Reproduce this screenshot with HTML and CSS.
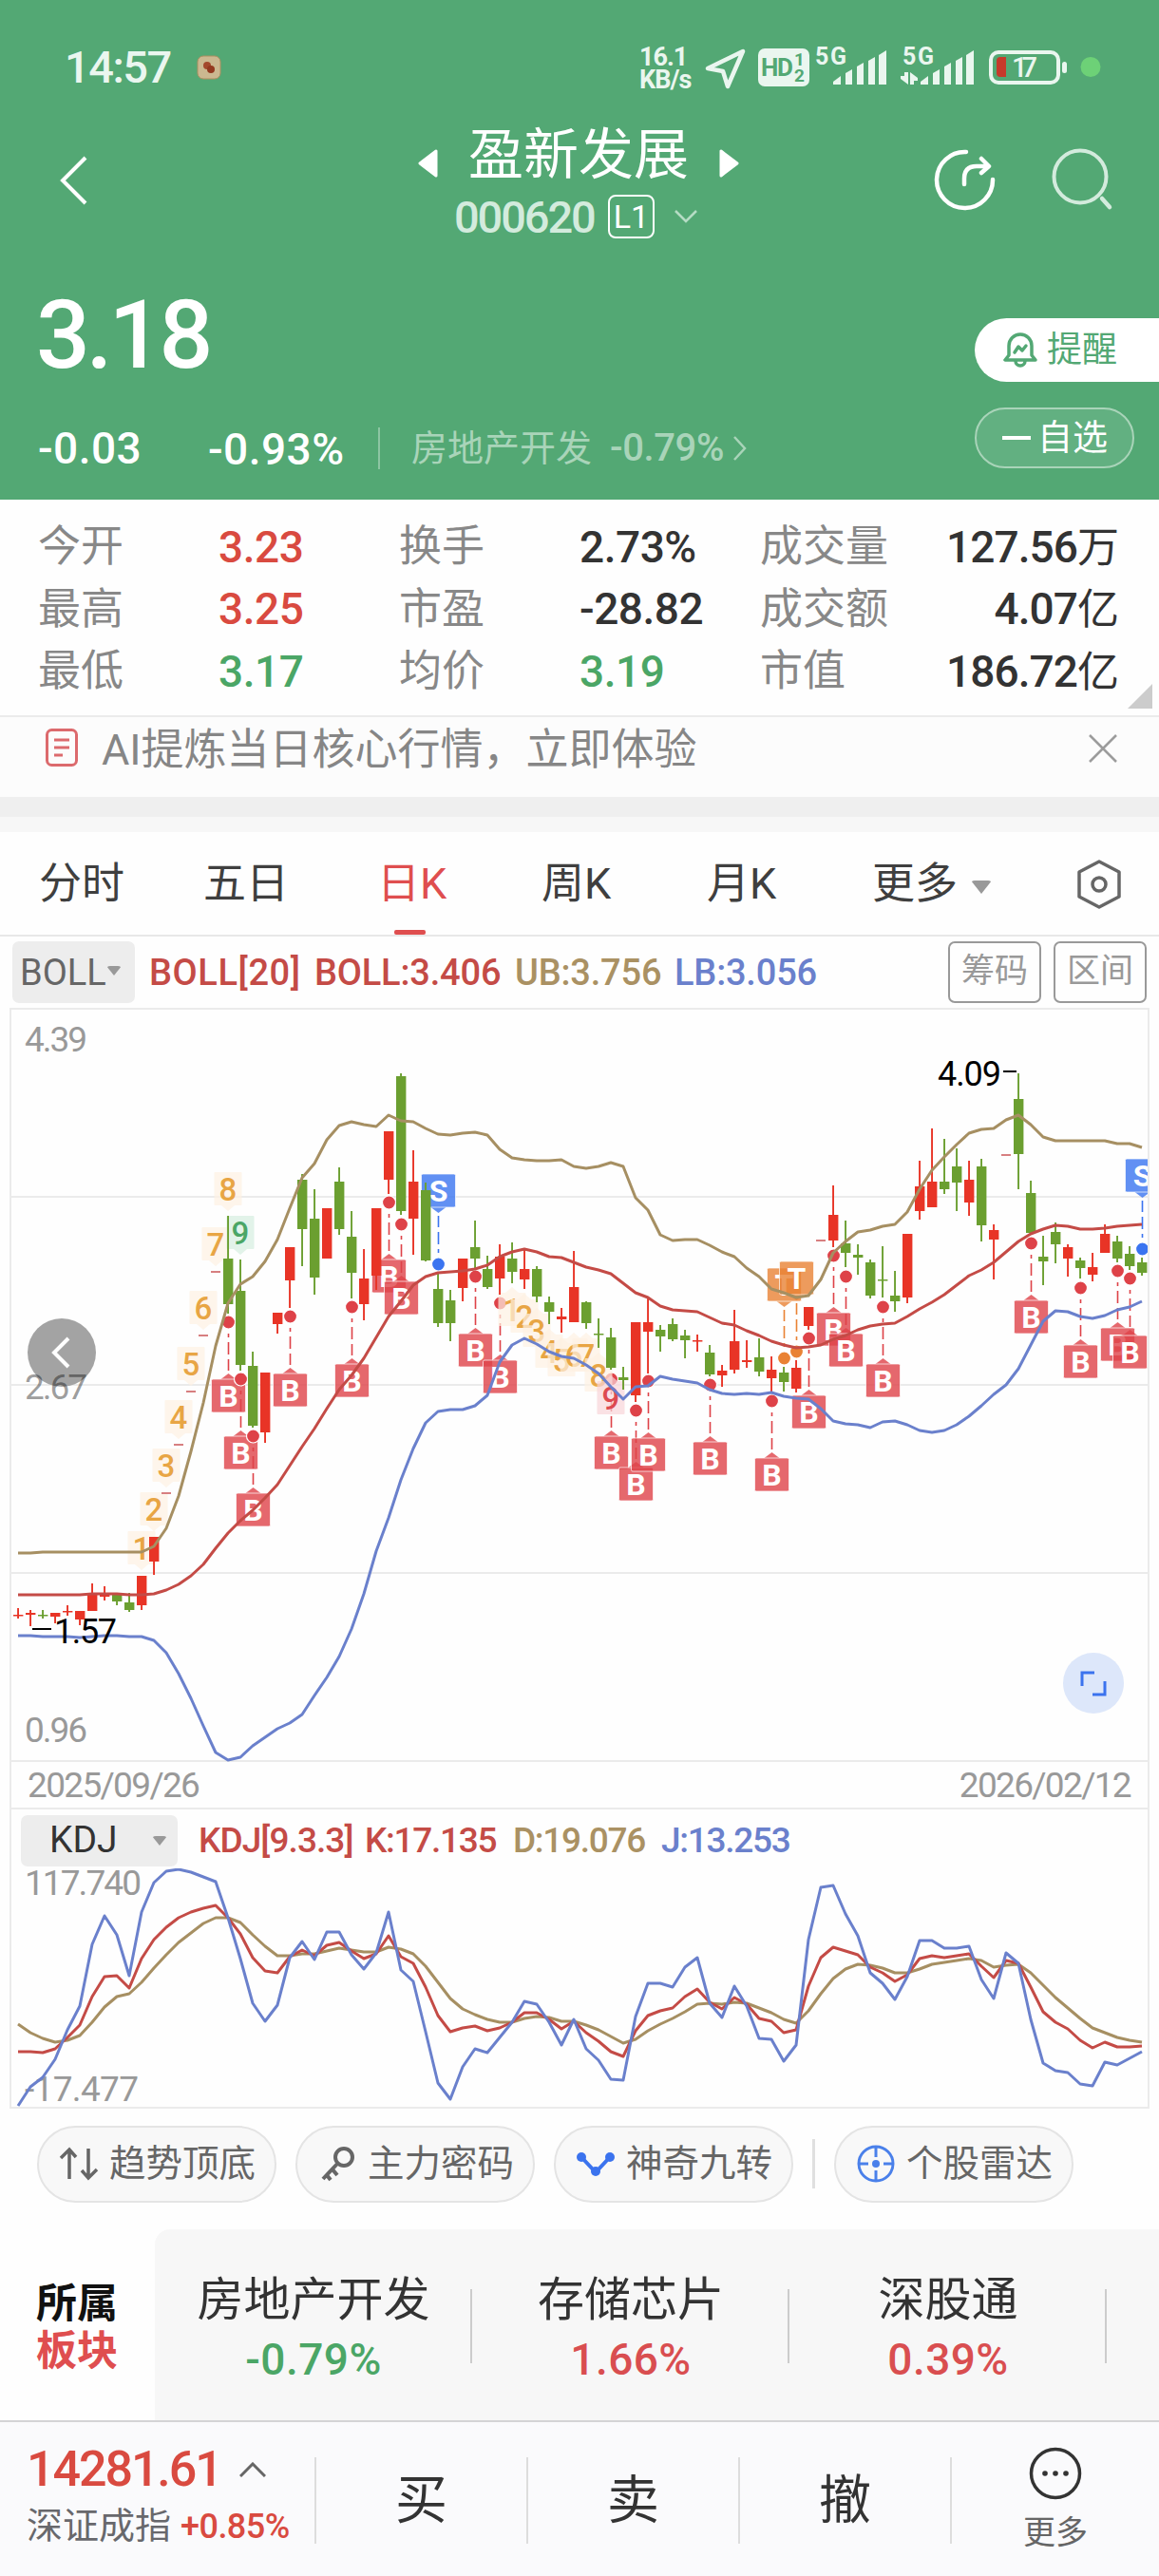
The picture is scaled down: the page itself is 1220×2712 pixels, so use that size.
FILE: index.html
```html
<!DOCTYPE html>
<html lang="zh-CN">
  <head>
    <meta charset="UTF-8" />
    <meta name="viewport" content="width=device-width, initial-scale=1.0" />
    <title>盈新发展 000620</title>
    <link rel="stylesheet" href="styles.css">
  </head>

  <body>
    <header class="top">
      <div class="status">
        <span class="clock">14:57</span>
        <svg class="status-app" width="26" height="26" viewBox="0 0 26 26">
          <rect x="1" y="1" width="24" height="24" rx="6" fill="#cbb890" stroke="#b08f60" />
          <circle cx="11" cy="11" r="4" fill="#a3482c" />
          <circle cx="15" cy="15" r="4" fill="#93391f" />
        </svg>
        <span class="speed">16.1<br>KB/s</span>
        <svg class="status-icons" width="430" height="60" viewBox="740 42 430 60">
          <path d="M746 72 L783 54 L767 91 L762 75 Z" fill="none" stroke="#eaf6ef" stroke-width="4.500" stroke-linejoin="round" />
          <rect x="799" y="51" width="54" height="40" rx="7" fill="#eaf6ef" />
          <text class="st-hd" x="802" y="80" textLength="34">HD</text>
          <text class="st-sm" x="837" y="69">1</text>
          <text class="st-sm" x="837" y="86">2</text>
          <text class="st-5g" x="859" y="68" textLength="33">5G</text>
          <g fill="#eaf6ef">
            <path d="M878 89 V86 L886 80 V89 Z" />
            <path d="M891 89 V77 L898 73 V89 Z" />
            <path d="M903 89 V70 L910 66 V89 Z" />
            <path d="M915 89 V64 L922 60 V89 Z" />
            <path d="M926 89 V58 L934 53 V89 Z" />
            <path d="M970 89 V86 L978 80 V89 Z" />
            <path d="M983 89 V77 L990 73 V89 Z" />
            <path d="M995 89 V70 L1002 66 V89 Z" />
            <path d="M1007 89 V64 L1014 60 V89 Z" />
            <path d="M1018 89 V58 L1026 53 V89 Z" />
            <path d="M953 76 h4 v13 l-8 -6 v-3 h4 Z" />
            <path d="M959 76 l8 6 v3 h-4 v4 h-4 Z" />
            <rect x="1119" y="65" width="5" height="12" rx="2.500" />
          </g>
          <text class="st-5g" x="951" y="68" textLength="33">5G</text>
          <rect x="1044" y="55" width="71" height="32" rx="8" fill="none" stroke="#eaf6ef" stroke-width="4" />
          <path d="M1060 60 h-6 a4 4 0 0 0 -4 4 v13 a4 4 0 0 0 4 4 h6 Z" fill="#c63a2b" />
          <text class="st-bat" x="1066" y="81" textLength="27">17</text>
          <circle cx="1149" cy="70.500" r="10.500" fill="#6dd177" />
        </svg>
      </div>

      <div class="nav">
        <svg width="40" height="60" viewBox="57 160 40 60" class="nav-back">
          <path d="M90 166 L66 190 L90 214" fill="none" stroke="#fff" stroke-width="4" />
        </svg>
        <div class="nav-title">
          <div class="stock-name">
            <svg width="21" height="30" viewBox="0 0 21 30"><path d="M19 2 V28 L2 15 Z" fill="#fff" stroke="#fff" stroke-width="3" stroke-linejoin="round" /></svg>
            <h1>盈新发展</h1>
            <svg width="21" height="30" viewBox="0 0 21 30"><path d="M2 2 V28 L19 15 Z" fill="#fff" stroke="#fff" stroke-width="3" stroke-linejoin="round" /></svg>
          </div>
          <div class="stock-code">
            <span class="num code">000620</span>
            <span class="level">L1</span>
            <svg width="26" height="16" viewBox="0 0 26 16"><path d="M2 2 L13 13 L24 2" fill="none" stroke="#b5dcc4" stroke-width="2.500" /></svg>
          </div>
        </div>
        <svg class="nav-icons" width="200" height="76" viewBox="980 150 200 76">
          <path d="M1018 160 A29.500 29.500 0 1 0 1046 189" fill="none" stroke="#fff" stroke-width="4.500" stroke-linecap="round" />
          <path d="M1016 194 V188 Q1016 175 1029 175 H1041 M1034 167 L1042 175 L1034 182" fill="none" stroke="#fff" stroke-width="4.500" stroke-linecap="round" stroke-linejoin="round" />
          <circle cx="1138" cy="186" r="27.500" fill="none" stroke="#d3ebdd" stroke-width="4" />
          <path d="M1161 209 L1169 218" stroke="#d3ebdd" stroke-width="4.500" stroke-linecap="round" />
        </svg>
      </div>

      <div class="quote">
        <div class="quote-left">
          <div class="price num">3.18</div>
          <div class="change">
            <span class="num chg">-0.03</span>
            <span class="num pct">-0.93%</span>
            <span class="industry">房地产开发</span>
            <span class="num industry-pct">-0.79%</span>
            <svg width="16" height="28" viewBox="0 0 16 28"><path d="M2 2 L13 14 L2 26" fill="none" stroke="#a9d4b9" stroke-width="2.500" /></svg>
          </div>
        </div>
        <div class="quote-right">
          <div class="alert-btn">
            <svg width="36" height="40" viewBox="0 0 36 40" fill="none" stroke="#53a874" stroke-width="3.500" stroke-linejoin="round" stroke-linecap="round">
              <path d="M2 30 H34 L30 25 V15 A12 12 0 0 0 6 15 V25 Z" />
              <path d="M13 31 a5 5 0 0 0 10 0" />
              <path d="M12 22 L16 16 L20 20 L24 15" />
            </svg>
            提醒
          </div>
          <div class="fav-btn"><i></i>自选</div>
        </div>
      </div>
    </header>

    <section class="stats">
      <dl>
        <dt>今开</dt><dd class="num up">3.23</dd>
        <dt>换手</dt><dd class="num">2.73%</dd>
        <dt>成交量</dt><dd class="num right">127.56<b>万</b></dd>
        <dt>最高</dt><dd class="num up">3.25</dd>
        <dt>市盈</dt><dd class="num">-28.82</dd>
        <dt>成交额</dt><dd class="num right">4.07<b>亿</b></dd>
        <dt>最低</dt><dd class="num down">3.17</dd>
        <dt>均价</dt><dd class="num down">3.19</dd>
        <dt>市值</dt><dd class="num right">186.72<b>亿</b></dd>
      </dl>
      <i class="corner"></i>
    </section>

    <section class="ai-tip">
      <svg width="34" height="40" viewBox="0 0 34 40" fill="none" stroke="#dc6a6d" stroke-width="3">
        <rect x="1.500" y="1.500" width="31" height="37" rx="5" />
        <path d="M9 12 H25 M9 20 H25 M9 28 H18" />
      </svg>
      <span>AI提炼当日核心行情，立即体验</span>
      <svg class="close" width="30" height="30" viewBox="0 0 30 30"><path d="M1 1 L29 29 M29 1 L1 29" stroke="#9c9c9c" stroke-width="2.500" /></svg>
    </section>
    <div class="band"></div>

    <nav class="tabs">
      <span>分时</span>
      <span>五日</span>
      <span class="active">日K</span>
      <span>周K</span>
      <span>月K</span>
      <span>更多<i class="caret"></i></span>
      <svg width="48" height="54" viewBox="0 0 48 54" fill="none" stroke="#666" stroke-width="3.500" stroke-linejoin="round">
        <path d="M24 3 L45 14 V40 L24 51 L3 40 V14 Z" />
        <circle cx="24" cy="27" r="7" />
      </svg>
    </nav>

    <div class="boll-bar">
      <span class="picker">BOLL<i class="caret"></i></span>
      <span class="num boll-a">BOLL[20]</span>
      <span class="num boll-b">BOLL:3.406</span>
      <span class="num boll-c">UB:3.756</span>
      <span class="num boll-d">LB:3.056</span>
      <span class="tool">筹码</span>
      <span class="tool">区间</span>
    </div>

    <div class="panel">
      <svg id="boll" width="1196" height="792" viewBox="12 1063 1196 792"></svg>
      <div class="dates num"><span>2025/09/26</span><span>2026/02/12</span></div>
      <div class="kdj-bar">
        <span class="picker">KDJ<i class="caret"></i></span>
        <span class="num kdj-a">KDJ[9.3.3]</span>
        <span class="num kdj-b">K:17.135</span>
        <span class="num kdj-c">D:19.076</span>
        <span class="num kdj-d">J:13.253</span>
      </div>
      <svg id="kdj" width="1196" height="251" viewBox="12 1967 1196 251"></svg>
    </div>

    <div class="chips">
      <span class="chip">
        <svg width="42" height="36" viewBox="0 0 42 36" fill="none" stroke="#666" stroke-width="3.500"><path d="M11 34 V3 M2 12 L11 3 L18 11 M31 2 V33 M40 24 L31 33 L24 25" /></svg>
        趋势顶底
      </span>
      <span class="chip">
        <svg width="42" height="38" viewBox="0 0 42 38" fill="none" stroke="#666" stroke-width="4"><circle cx="28" cy="12" r="9" /><path d="M22 18 L6 35 M16 25 L21 31 M10 31 L14 36" /></svg>
        主力密码
      </span>
      <span class="chip">
        <svg width="42" height="38" viewBox="0 0 42 38" fill="#3b73ee"><path d="M6 12 L21 28 L36 12" fill="none" stroke="#3b73ee" stroke-width="4" /><circle cx="6" cy="12" r="5" /><circle cx="21" cy="27" r="5" /><circle cx="36" cy="12" r="5" /></svg>
        神奇九转
      </span>
      <i class="chip-line"></i>
      <span class="chip">
        <svg width="42" height="42" viewBox="0 0 42 42" fill="none" stroke="#4a80ea" stroke-width="3"><circle cx="21" cy="21" r="18" /><path d="M21 3 V14 M21 28 V39 M3 21 H13 M29 21 H39" /><circle cx="21" cy="21" r="4" fill="#4a80ea" stroke="none" /></svg>
        个股雷达
      </span>
    </div>

    <section class="plates">
      <div class="plates-head">所属<em>板块</em></div>
      <div class="plates-list">
        <div class="plate">房地产开发<span class="num down">-0.79%</span></div>
        <div class="plate">存储芯片<span class="num red">1.66%</span></div>
        <div class="plate">深股通<span class="num red">0.39%</span></div>
      </div>
    </section>

    <footer class="trade">
      <div class="index">
        <div class="index-top"><span class="num">14281.61</span>
          <svg width="28" height="16" viewBox="0 0 28 16"><path d="M1 15 L14 2 L27 15" fill="none" stroke="#666" stroke-width="3" /></svg>
        </div>
        <div class="index-sub">深证成指<span class="num">+0.85%</span></div>
      </div>
      <div class="act">买</div>
      <div class="act">卖</div>
      <div class="act">撤</div>
      <div class="more">
        <svg width="56" height="56" viewBox="0 0 56 56"><circle cx="28" cy="28" r="25.500" fill="none" stroke="#333" stroke-width="3.500" /><g fill="#333"><circle cx="17" cy="28" r="2.800" /><circle cx="28" cy="28" r="2.800" /><circle cx="39" cy="28" r="2.800" /></g></svg>
        更多
      </div>
    </footer>

    <script src="chart.js"></script>
  </body>
</html>
```
FILE: styles.css
```css
* {
  box-sizing: border-box;
}

body {
  margin: 0;
  width: 1220px;
  height: 2712px;
  overflow: hidden;
  background: #fefefe;
  color: #333;
  font-family: Roboto, "Noto Sans CJK SC", sans-serif;
  font-size: 45px;
  line-height: 1;
}

svg {
  display: block;
  flex: none;
}

.num {
  font-weight: 500;
  letter-spacing: -0.035em;
  white-space: nowrap;
}

.up { color: #d94a40; }
.red { color: #d94e50; }
.down { color: #4ba666; }

/* header */
.top {
  height: 526px;
  background: #53a874;
  color: #fff;
}

.status {
  display: flex;
  height: 102px;
  padding: 42px 0 0 68px;
  color: #eaf6ef;
}

.clock {
  width: 139px;
  padding-top: 5px;
  font-size: 47px;
  font-weight: 500;
  letter-spacing: -1.5px;
}

.status-app {
  margin-top: 16px;
}

.speed {
  width: 66px;
  margin: 6px 0 0 440px;
  font-size: 27px;
  font-weight: 700;
  letter-spacing: -1px;
  line-height: 24px;
}

.st-hd { font-size: 26px; font-weight: 700; fill: #53a874; }
.st-sm { font-size: 19px; font-weight: 700; fill: #53a874; }
.st-5g { font-size: 25px; font-weight: 700; fill: #eaf6ef; }
.st-bat { font-size: 29px; font-weight: 500; fill: #eaf6ef; }

.nav {
  display: flex;
  height: 158px;
}

.nav-back {
  margin: 58px 0 0 57px;
}

.nav-title {
  width: 700px;
  margin-left: 162px;
}

.stock-name {
  display: flex;
  justify-content: center;
  align-items: center;
  gap: 32px;
  height: 118px;
  margin-top: 2px;
}

.stock-name svg {
  margin-top: 18px;
}

h1 {
  margin: 0;
  font-size: 58px;
  font-weight: 400;
}

.stock-code {
  display: flex;
  align-items: center;
  height: 48px;
  margin: -18px 0 0 219px;
}

.code {
  width: 162px;
  font-size: 47px;
  letter-spacing: -0.045em;
  color: #d3ebdd;
}

.level {
  width: 49px;
  height: 46px;
  margin-right: 20px;
  border: 2px solid #fff;
  border-radius: 8px;
  font-size: 34px;
  line-height: 43px;
  text-align: center;
}

.nav-icons {
  margin: 48px 0 0 20px;
}

.quote {
  display: flex;
  justify-content: space-between;
}

.price {
  height: 178px;
  padding: 43px 0 0 38px;
  font-size: 100px;
  letter-spacing: -0.04em;
}

.change {
  display: flex;
  align-items: center;
  height: 68px;
  padding-left: 40px;
  color: #fff;
}

.chg {
  width: 179px;
  font-size: 46px;
  letter-spacing: 0.01em;
}

.pct {
  width: 181px;
  height: 44px;
  border-right: 2px solid #8cc5a2;
  font-size: 46px;
  letter-spacing: 0.01em;
}

.industry {
  margin-left: 33px;
  width: 209px;
  font-size: 38px;
  color: #a9d4b9;
}

.industry-pct {
  width: 129px;
  font-size: 40px;
  letter-spacing: -0.01em;
  color: #a9d4b9;
}

.quote-right {
  padding-top: 75px;
  font-size: 37px;
}

.alert-btn {
  display: flex;
  align-items: center;
  gap: 10px;
  width: 194px;
  height: 67px;
  padding-left: 30px;
  border-radius: 34px 0 0 34px;
  background: #fff;
  color: #53a874;
}

.fav-btn {
  display: flex;
  align-items: center;
  gap: 7px;
  width: 168px;
  height: 64px;
  margin-top: 27px;
  padding-left: 27px;
  border: 2px solid #a9d4b9;
  border-radius: 32px;
  background: #62b081;
}

.fav-btn i {
  width: 30px;
  height: 4px;
  background: #fff;
}

/* quote numbers */
.stats {
  position: relative;
  height: 229px;
  padding: 17px 0 0 40px;
  border-bottom: 2px solid #ebebeb;
}

.stats dl {
  display: grid;
  grid-template-columns: 190px 190px 190px 190px 150px 228px;
  grid-auto-rows: 65.5px;
  align-items: center;
  margin: 0;
}

.stats dt {
  white-space: nowrap;
  color: #888;
}

.stats dd {
  margin: 0;
  font-size: 46px;
  letter-spacing: -0.01em;
}

.stats .right {
  letter-spacing: -0.02em;
  text-align: right;
}

.right b {
  font-size: 44px;
  font-weight: 400;
  letter-spacing: 0;
}

.corner {
  position: absolute;
  right: 7px;
  bottom: 7px;
  border-left: 26px solid transparent;
  border-bottom: 26px solid #ccc;
}

.ai-tip {
  display: flex;
  height: 84px;
  padding: 12px 44px 0 48px;
  background: #fcfcfc;
  color: #868686;
}

.ai-tip span {
  margin: 0 0 0 25px;
  font-size: 45px;
}

.close {
  margin: 6px 0 0 auto;
}

.band {
  height: 37px;
  border-top: 21px solid #efefef;
  background: #f7f7f7;
}

.tabs {
  display: flex;
  align-items: center;
  height: 110px;
  padding: 1px 0 0 41px;
  border-bottom: 2px solid #e8e8e8;
}

.tabs span {
  position: relative;
  width: 174px;
  color: #3f3f3f;
  white-space: nowrap;
}

.tabs span:nth-child(1) { width: 173px; }
.tabs span:nth-child(2) { width: 183px; }
.tabs span:nth-child(3) { width: 173px; }
.tabs span:nth-child(6) { width: 215px; }

.tabs .active {
  color: #df4e4f;
}

.tabs .active::after {
  content: "";
  position: absolute;
  left: 18px;
  bottom: -31px;
  width: 33px;
  height: 5px;
  border-radius: 2px;
  background: #df4e4f;
}

.caret {
  display: inline-block;
  border: 11px solid transparent;
  border-top: 14px solid #999;
  border-bottom: 0;
  border-radius: 4px;
}

.tabs .caret {
  margin: 0 0 5px 14px;
}

/* indicator bars */
.boll-bar,
.kdj-bar {
  display: flex;
  align-items: center;
  font-size: 38px;
}

.boll-bar {
  height: 75px;
  padding: 0 13px;
}

.boll-bar .num {
  letter-spacing: -0.005em;
}

.picker {
  display: flex;
  align-items: center;
  border-radius: 7px;
  background: #ededed;
}

.boll-bar .picker {
  width: 129px;
  height: 65px;
  padding-left: 8px;
  margin-right: 15px;
  color: #666;
}

.boll-bar .caret {
  border-width: 10px 8px 0;
  margin-bottom: 4px;
}

.boll-bar .boll-a {
  width: 174px;
  letter-spacing: 0.015em;
  color: #c44b46;
}

.boll-b { width: 211px; color: #c44b46; }
.boll-c { width: 168px; color: #aa9163; }
.boll-d { color: #6a80cc; }

.tool {
  width: 98px;
  height: 65px;
  margin-left: 13px;
  border: 2px solid #999;
  border-radius: 7px;
  font-size: 35px;
  line-height: 60px;
  text-align: center;
  color: #999;
}

.boll-d + .tool {
  margin-left: auto;
}

.panel {
  width: 1200px;
  margin: 0 10px;
  border: 2px solid #ebebeb;
}

.dates {
  display: flex;
  justify-content: space-between;
  height: 50px;
  padding: 6px 18px 0 17px;
  border-bottom: 2px solid #ebebeb;
  font-size: 37px;
  font-weight: 400;
  letter-spacing: -0.045em;
  color: #999;
}

.kdj-bar {
  height: 62px;
  padding: 3px 0 0 10px;
  font-size: 37px;
}

.kdj-bar .picker {
  width: 165px;
  height: 54px;
  padding: 0 11px 0 30px;
  margin-right: 22px;
  justify-content: space-between;
  font-size: 39px;
  color: #333;
}

.kdj-bar .caret {
  border-width: 10px 8px 0;
}

.kdj-a { width: 175px; color: #c44b46; }
.kdj-b { width: 156px; color: #c44b46; }
.kdj-c { width: 156px; color: #aa9163; }
.kdj-d { color: #6a80cc; }

.kdj-bar .kdj-a {
  letter-spacing: -0.025em;
}

/* chart parts */
.grid { stroke: #ebebeb; stroke-width: 2; }
.line { fill: none; stroke-width: 3; stroke-linejoin: round; }
.line-mid { stroke: #c44b46; }
.line-up { stroke: #a68f62; }
.line-low { stroke: #6a80cc; }
.rise { fill: #e83426; }
.fall { fill: #6b9f30; }
.axis { font-size: 37px; fill: #999; }
.peak { font-size: 36px; fill: #000; }
.tag-text { font-size: 32px; font-weight: 700; fill: #fff; text-anchor: middle; }
.nine-text { font-size: 33px; font-weight: 500; text-anchor: middle; }

/* shortcuts */
.chips {
  display: flex;
  align-items: center;
  height: 127px;
  padding: 0 0 11px 39px;
  gap: 20px;
}

.chip {
  display: flex;
  align-items: center;
  width: 252px;
  height: 81px;
  padding-left: 21px;
  border: 2px solid #e4e4e4;
  border-radius: 41px;
  background: #f8f8f8;
  font-size: 38.5px;
  white-space: nowrap;
  color: #666;
}

.chip svg {
  margin-right: 11px;
}

.chip-line {
  width: 3px;
  height: 52px;
  background: #e0e0e0;
}

.plates {
  display: flex;
  height: 201px;
}

.plates-head {
  width: 163px;
  padding: 53px 0 0 38px;
  font-size: 43px;
  font-weight: 700;
  line-height: 50px;
  color: #111;
}

.plates-head em {
  display: block;
  font-style: normal;
  color: #df4e4f;
}

.plates-list {
  display: flex;
  flex: 1;
  padding: 51px 0 0;
  border-radius: 16px 0 0 0;
  background: #f7f7f7;
}

/* the divider is shorter than the text block */
.plate {
  width: 334px;
  height: 110px;
  background: linear-gradient(#ccc, #ccc) right 12px / 2px 78px no-repeat;
  font-size: 49px;
  line-height: 48px;
  text-align: center;
}

.plate span {
  display: block;
  margin-top: 14px;
  font-size: 46px;
  letter-spacing: 0.01em;
}

/* trade bar */
.trade {
  display: flex;
  height: 165px;
  padding: 37px 0 0;
  border-top: 2px solid #d3d3d5;
  background: #fafafc;
}

.index {
  width: 333px;
  height: 91px;
  padding-left: 28px;
  border-right: 2px solid #ddd;
}

.index-top {
  display: flex;
  align-items: center;
  height: 38px;
  margin-top: -6px;
  gap: 19px;
  font-size: 52px;
  color: #d94a40;
}

.index-top .num {
  letter-spacing: -0.04em;
}

.index-sub {
  margin-top: 21px;
  font-size: 38px;
  white-space: nowrap;
  color: #68686c;
}

.index-sub span {
  margin-left: 10px;
  font-size: 36px;
  letter-spacing: -0.015em;
  color: #d94a40;
}

.act {
  width: 223px;
  height: 91px;
  border-right: 2px solid #ddd;
  font-size: 55px;
  line-height: 91px;
  text-align: center;
}

.more {
  display: flex;
  flex: 1;
  flex-direction: column;
  align-items: center;
  gap: 17px;
  margin-top: -11px;
  font-size: 34px;
  color: #666;
}
```
FILE: chart.js
```js
const boll = document.getElementById('boll');
const kdj = document.getElementById('kdj');

const X0 = 19;
const STEP = 13;
const x = (i) => X0 + STEP * i;

// r = rise, g = fall: [color, high, body top, body bottom, low]
const candles = [
  ['r', 1693, 1700, 1701, 1704], ['r', 1695, 1698, 1700, 1712], ['g', 1695, 1700, 1701, 1704],
  ['r', 1698, 1698, 1702, 1709], ['r', 1690, 1696, 1697, 1701], ['r', 1696, 1696, 1705, 1711],
  ['r', 1667, 1678, 1696, 1696], ['r', 1670, 1678, 1681, 1685], ['g', 1677, 1678, 1686, 1690],
  ['g', 1677, 1687, 1695, 1697], ['r', 1659, 1659, 1690, 1695], ['r', 1618, 1618, 1644, 1658],
  ['-', 1572], ['-', 1521], ['-', 1465], ['-', 1406], ['-', 1339],
  ['g', 1280, 1325, 1373, 1383], ['g', 1326, 1359, 1437, 1443], ['g', 1423, 1438, 1501, 1503],
  ['r', 1445, 1445, 1508, 1519], ['r', 1382, 1382, 1394, 1404], ['r', 1313, 1313, 1348, 1377],
  ['g', 1236, 1242, 1294, 1333], ['g', 1252, 1283, 1345, 1363], ['r', 1272, 1272, 1325, 1325],
  ['g', 1229, 1244, 1294, 1300], ['g', 1275, 1302, 1340, 1367], ['r', 1315, 1346, 1373, 1390],
  ['r', 1272, 1272, 1343, 1358], ['r', 1191, 1191, 1242, 1257], ['g', 1130, 1133, 1275, 1279],
  ['r', 1211, 1244, 1283, 1321], ['g', 1245, 1253, 1327, 1328], ['g', 1341, 1357, 1393, 1397],
  ['g', 1358, 1369, 1393, 1412], ['r', 1325, 1325, 1356, 1370], ['g', 1285, 1313, 1325, 1337],
  ['g', 1322, 1336, 1355, 1357], ['r', 1310, 1323, 1346, 1363], ['g', 1308, 1325, 1339, 1351],
  ['r', 1316, 1336, 1347, 1357], ['g', 1333, 1336, 1365, 1371], ['g', 1365, 1371, 1381, 1394],
  ['r', 1377, 1386, 1389, 1403], ['r', 1317, 1355, 1392, 1392], ['g', 1370, 1371, 1393, 1399],
  ['g', 1388, 1404, 1405, 1419], ['g', 1398, 1408, 1440, 1442], ['g', 1439, 1450, 1453, 1463],
  ['r', 1392, 1392, 1469, 1476], ['r', 1367, 1392, 1402, 1446], ['g', 1395, 1400, 1407, 1423],
  ['g', 1388, 1394, 1410, 1412], ['g', 1400, 1406, 1411, 1430], ['r', 1405, 1411, 1412, 1423],
  ['g', 1416, 1424, 1447, 1449], ['r', 1437, 1443, 1448, 1460], ['r', 1379, 1412, 1442, 1446],
  ['r', 1411, 1432, 1434, 1440], ['g', 1409, 1429, 1444, 1449], ['r', 1428, 1442, 1451, 1466],
  ['g', 1439, 1445, 1455, 1465], ['r', 1432, 1440, 1462, 1466], ['r', 1376, 1376, 1396, 1400],
  ['-', 1306], ['r', 1248, 1279, 1306, 1313], ['g', 1285, 1309, 1319, 1334],
  ['g', 1310, 1321, 1324, 1342], ['g', 1326, 1329, 1364, 1367], ['g', 1312, 1347, 1348, 1366],
  ['g', 1338, 1364, 1370, 1381], ['r', 1299, 1299, 1366, 1372], ['r', 1222, 1249, 1275, 1284],
  ['r', 1188, 1244, 1271, 1271], ['g', 1199, 1244, 1252, 1257], ['g', 1209, 1228, 1245, 1275],
  ['r', 1222, 1242, 1266, 1280], ['g', 1220, 1228, 1290, 1307], ['r', 1289, 1295, 1305, 1347],
  ['-', 1216], ['g', 1130, 1157, 1215, 1252], ['g', 1243, 1256, 1298, 1299],
  ['g', 1301, 1323, 1328, 1353], ['g', 1287, 1297, 1310, 1330], ['r', 1310, 1313, 1325, 1344],
  ['g', 1324, 1327, 1335, 1346], ['r', 1319, 1334, 1342, 1349], ['r', 1289, 1299, 1319, 1319],
  ['g', 1301, 1307, 1325, 1329], ['g', 1312, 1320, 1333, 1337], ['g', 1324, 1329, 1340, 1343],
];

const upper = [
  1635, 1635, 1634, 1634, 1634, 1634, 1634, 1634, 1634, 1634, 1634, 1628, 1609, 1575, 1528, 1477,
  1417, 1372, 1352, 1344, 1328, 1305, 1272, 1240, 1225, 1200, 1185, 1181, 1184, 1186, 1174, 1180,
  1181, 1188, 1194, 1195, 1193, 1192, 1195, 1210, 1219, 1221, 1222, 1222, 1221, 1228, 1230, 1228,
  1224, 1228, 1261, 1274, 1300, 1306, 1305, 1305, 1311, 1318, 1323, 1335, 1344, 1357, 1361, 1366,
  1364, 1347, 1319, 1307, 1297, 1295, 1291, 1289, 1276, 1252, 1232, 1218, 1205, 1193, 1189, 1188,
  1179, 1174, 1184, 1197, 1201, 1201, 1201, 1201, 1201, 1204, 1204, 1208,
];
const middle = [
  1679, 1679, 1679, 1679, 1679, 1679, 1678, 1678, 1678, 1679, 1679, 1678, 1674, 1668, 1659, 1647,
  1630, 1614, 1601, 1590, 1577, 1563, 1543, 1523, 1504, 1483, 1463, 1448, 1430, 1408, 1386, 1370,
  1353, 1344, 1340, 1339, 1338, 1336, 1332, 1323, 1318, 1315, 1318, 1323, 1324, 1329, 1334, 1337,
  1341, 1351, 1361, 1366, 1375, 1379, 1380, 1381, 1387, 1393, 1395, 1401, 1406, 1412, 1416, 1419,
  1418, 1416, 1410, 1406, 1400, 1396, 1394, 1393, 1386, 1378, 1371, 1363, 1353, 1343, 1337, 1329,
  1318, 1307, 1299, 1294, 1290, 1291, 1294, 1294, 1293, 1291, 1290, 1289,
];
const lower = [
  1722, 1722, 1723, 1723, 1723, 1724, 1723, 1722, 1722, 1723, 1723, 1727, 1740, 1762, 1788, 1817,
  1845, 1853, 1850, 1838, 1829, 1820, 1814, 1805, 1785, 1766, 1744, 1715, 1678, 1633, 1598, 1558,
  1525, 1498, 1486, 1484, 1484, 1480, 1469, 1434, 1416, 1409, 1415, 1423, 1428, 1430, 1437, 1446,
  1460, 1473, 1460, 1459, 1449, 1452, 1454, 1456, 1463, 1467, 1468, 1467, 1468, 1466, 1470, 1472,
  1473, 1483, 1496, 1499, 1500, 1503, 1497, 1496, 1500, 1506, 1508, 1506, 1500, 1491, 1480, 1468,
  1458, 1441, 1416, 1391, 1380, 1381, 1386, 1388, 1385, 1379, 1376, 1370,
];

const lineK = [
  2160, 2160, 2161, 2157, 2145, 2132, 2102, 2081, 2080, 2093, 2062, 2042, 2029, 2019, 2013, 2009,
  2006, 2019, 2036, 2061, 2075, 2077, 2060, 2053, 2059, 2048, 2045, 2054, 2062, 2057, 2038, 2060,
  2067, 2092, 2122, 2139, 2135, 2133, 2138, 2135, 2129, 2119, 2119, 2126, 2136, 2128, 2140, 2149,
  2160, 2165, 2138, 2122, 2117, 2114, 2102, 2094, 2108, 2115, 2103, 2110, 2125, 2128, 2140, 2137,
  2091, 2061, 2050, 2054, 2058, 2071, 2077, 2086, 2079, 2062, 2059, 2061, 2059, 2057, 2070, 2082,
  2064, 2067, 2092, 2118, 2129, 2136, 2148, 2156, 2150, 2155, 2155, 2154,
];
const lineD = [
  2131, 2140, 2146, 2150, 2148, 2143, 2129, 2113, 2102, 2099, 2087, 2072, 2058, 2045, 2035, 2025,
  2019, 2019, 2024, 2037, 2049, 2059, 2059, 2057, 2057, 2054, 2051, 2053, 2055, 2055, 2050, 2052,
  2057, 2070, 2087, 2104, 2115, 2121, 2126, 2129, 2129, 2125, 2123, 2124, 2128, 2128, 2132, 2137,
  2144, 2151, 2147, 2138, 2131, 2125, 2118, 2110, 2109, 2110, 2108, 2109, 2114, 2119, 2126, 2130,
  2117, 2099, 2083, 2073, 2068, 2069, 2072, 2077, 2077, 2073, 2068, 2066, 2064, 2062, 2064, 2071,
  2069, 2068, 2077, 2090, 2103, 2114, 2125, 2135, 2140, 2145, 2148, 2150,
];
const lineJ = [
  2217, 2197, 2187, 2168, 2137, 2112, 2047, 2017, 2037, 2080, 2013, 1982, 1970, 1968, 1971, 1976,
  1981, 2019, 2062, 2109, 2128, 2111, 2061, 2044, 2063, 2034, 2034, 2058, 2073, 2056, 2013, 2074,
  2086, 2139, 2193, 2210, 2176, 2157, 2161, 2145, 2129, 2107, 2110, 2129, 2153, 2126, 2157, 2169,
  2189, 2190, 2123, 2088, 2088, 2092, 2071, 2061, 2109, 2124, 2091, 2112, 2146, 2147, 2170, 2153,
  2042, 1987, 1985, 2015, 2038, 2077, 2088, 2105, 2081, 2043, 2043, 2051, 2051, 2049, 2084, 2104,
  2056, 2067, 2126, 2172, 2180, 2182, 2194, 2196, 2171, 2174, 2167, 2160,
];

// trade signals: [index, type, y of the dot]
const signals = [
  [17, 'B', 1392], [18, 'B', 1452], [19, 'B', 1512], [22, 'B', 1386], [27, 'B', 1376],
  [30, 'B', 1266], [31, 'B', 1289], [34, 'S', 1331], [37, 'B', 1344], [39, 'B', 1372],
  [48, 'B', 1452], [50, 'B', 1485], [51, 'B', 1454], [56, 'B', 1458], [61, 'B', 1475],
  [62, 'T', 1430], [63, 'T', 1423], [64, 'B', 1409], [66, 'B', 1322], [67, 'B', 1344],
  [70, 'B', 1376], [82, 'B', 1309], [86, 'B', 1356], [89, 'B', 1338], [90, 'B', 1346],
  [91, 'S', 1315],
];

// magic nine counts: [index, number, y of the box top, tip direction]
const nines = [
  [10, 1, 1612, 'down'], [11, 2, 1571, 'down'], [12, 3, 1525, 'down'], [13, 4, 1474, 'down'],
  [14, 5, 1418, 'down'], [15, 6, 1359, 'down'], [16, 7, 1292, 'down'], [17, 8, 1234, 'down'],
  [18, 9, 1280, 'down'],
  [40, 1, 1361, 'up'], [41, 2, 1368, 'up'], [42, 3, 1383, 'up'], [43, 4, 1405, 'up'],
  [44, 5, 1414, 'up'], [45, 6, 1409, 'up'], [46, 7, 1409, 'up'], [47, 8, 1430, 'up'],
  [48, 9, 1454, 'up'],
];

const tagColor = { B: '#de4248', S: '#3a74f0', T: '#e98234' };

function polyline(values, name) {
  const points = values.map((y, i) => `${x(i)},${y}`).join(' ');
  return `<polyline class="line ${name}" points="${points}" />`;
}

function drawSignal([i, type, y]) {
  const cx = x(i) + 0.5;
  const color = tagColor[type];
  const below = type === 'B';
  const top = below ? y + 60 : y - 95;
  const tip = below
    ? `M${cx - 8} ${top} L${cx} ${top - 6} L${cx + 8} ${top}`
    : `M${cx + 8} ${top + 35} L${cx} ${top + 41} L${cx - 8} ${top + 35}`;
  const from = below ? y + 12 : y - 12;
  const to = below ? top - 8 : top + 43;
  return `
    <line x1="${cx}" y1="${from}" x2="${cx}" y2="${to}" stroke="${color}" stroke-width="1.6" stroke-dasharray="4 5 13 5 12 5" />
    <path d="${tip} Z" fill="${color}" fill-opacity="0.8" />
    <rect x="${cx - 18}" y="${top}" width="36" height="35" rx="1.5" fill="${color}" fill-opacity="0.8" stroke="#fff" stroke-opacity="0.7" stroke-width="1" />
    <text class="tag-text" x="${cx}" y="${top + 29}">${type}</text>
    <circle cx="${cx}" cy="${y}" r="7" fill="${color}" stroke="#fff" stroke-width="1.2" />`;
}

function drawNine([i, n, top, dir]) {
  const cx = x(i);
  let box = '#fdf1e2';
  let ink = '#e8a544';
  if (n === 9) {
    box = dir === 'down' ? '#d5eee0' : '#f8d4d8';
    ink = dir === 'down' ? '#4ba666' : '#dd4a50';
  }
  const tip = dir === 'down'
    ? `M${cx - 7} ${top + 35} L${cx} ${top + 41} L${cx + 7} ${top + 35} Z`
    : `M${cx - 7} ${top} L${cx} ${top - 6} L${cx + 7} ${top} Z`;
  return `
    <path d="${tip}" fill="${box}" fill-opacity="0.7" />
    <rect x="${cx - 14.5}" y="${top}" width="29" height="35" rx="1" fill="${box}" fill-opacity="0.7" />
    <text class="nine-text" x="${cx}" y="${top + 30}" fill="${ink}">${n}</text>`;
}

function drawCandle([type, high, top, bottom, low], i) {
  const cx = x(i);
  if (type === '-') {
    return `<rect x="${cx - 5}" y="${high - 1}" width="10" height="2" fill="#d77f80" />`;
  }
  const name = type === 'r' ? 'rise' : 'fall';
  return `
    <rect class="${name}" x="${cx - 0.9}" y="${high}" width="1.9" height="${low - high}" />
    <rect class="${name}" x="${cx - 5}" y="${top}" width="10.4" height="${Math.max(bottom - top, 1.5)}" />`;
}

boll.innerHTML = `
  <path class="grid" d="M12 1260 H1208 M12 1458 H1208 M12 1656 H1208 M12 1854 H1208" />
  <text class="axis" x="26" y="1107" textLength="66">4.39</text>
  <circle cx="65" cy="1424" r="36" fill="#a3a3a3" />
  <path d="M72 1409 L57 1424 L72 1439" fill="none" stroke="#fff" stroke-width="4" />
  <text class="axis" x="26" y="1473" textLength="66" style="fill: rgba(0, 0, 0, 0.4)">2.67</text>
  <text class="axis" x="26" y="1834" textLength="66">0.96</text>
  ${signals.map(drawSignal).join('')}
  ${nines.map(drawNine).join('')}
  ${candles.map(drawCandle).join('')}
  ${polyline(upper, 'line-up')}
  ${polyline(middle, 'line-mid')}
  ${polyline(lower, 'line-low')}
  <text class="peak" x="987" y="1143" textLength="67">4.09</text>
  <path d="M1056 1128 H1070 M34 1715 H54" stroke="#000" stroke-width="2" />
  <text class="peak" x="57" y="1730" textLength="66">1.57</text>
  <circle cx="1151" cy="1772" r="32" fill="#dde7fa" />
  <path d="M1139 1775 V1761 H1152 M1150 1784 H1163 V1770" fill="none" stroke="#3b73ee" stroke-width="3" />`;

kdj.innerHTML = `
  <text class="axis" x="26" y="1995" textLength="123">117.740</text>
  <text class="axis" x="26" y="2212" textLength="120">-17.477</text>
  ${polyline(lineD, 'line-up')}
  ${polyline(lineK, 'line-mid')}
  ${polyline(lineJ, 'line-low')}`;
```
